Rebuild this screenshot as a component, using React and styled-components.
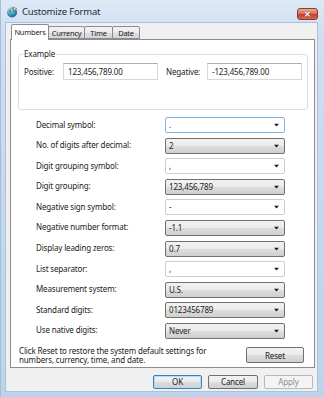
import React from 'react'
import styled, { createGlobalStyle } from 'styled-components'

const GlobalStyle = createGlobalStyle`
  html, body {
    margin: 0;
    padding: 0;
  }
  body {
    font-family: "Noto Sans", "Liberation Sans", sans-serif;
    font-size: 8px;
    letter-spacing: -0.15px;
    color: #222;
  }
  * {
    box-sizing: border-box;
  }
`

const tabs = [
  { name: 'Numbers', width: 38, active: true },
  { name: 'Currency', width: 37 },
  { name: 'Time', width: 29 },
  { name: 'Date', width: 28 },
]

const settings = [
  { label: 'Decimal symbol:', value: '.', kind: 'edit', focus: true },
  { label: 'No. of digits after decimal:', value: '2', kind: 'list' },
  { label: 'Digit grouping symbol:', value: ',', kind: 'edit' },
  { label: 'Digit grouping:', value: '123,456,789', kind: 'list' },
  { label: 'Negative sign symbol:', value: '-', kind: 'edit' },
  { label: 'Negative number format:', value: '-1.1', kind: 'list' },
  { label: 'Display leading zeros:', value: '0.7', kind: 'list' },
  { label: 'List separator:', value: ',', kind: 'edit' },
  { label: 'Measurement system:', value: 'U.S.', kind: 'list' },
  { label: 'Standard digits:', value: '0123456789', kind: 'list' },
  { label: 'Use native digits:', value: 'Never', kind: 'list' },
]

const GlobeIcon = () => (
  <svg width="12" height="12" viewBox="0 0 12 12">
    <defs>
      <radialGradient id="sea" cx="0.35" cy="0.3" r="0.8">
        <stop offset="0" stopColor="#bfe3ff" />
        <stop offset="0.6" stopColor="#2f86d6" />
        <stop offset="1" stopColor="#1a4f9a" />
      </radialGradient>
    </defs>
    <circle cx="6" cy="6.5" r="5" fill="url(#sea)" />
    <path d="M3 4.2c1-.9 2.2-.6 2.6.3.3.8-.6 1.2-.2 2 .4.7-.3 1.6-1.1 1.3C3.3 7.4 2.4 5 3 4.2z" fill="#4fae3a" />
    <path d="M7.2 6.2c.8-.4 1.9 0 2 .9.1.9-.9 1.7-1.6 1.4-.6-.3-.9-1.9-.4-2.3z" fill="#4fae3a" />
    <path d="M7 1.2l3.8 1.6-1.3.5 1.5 1.5-.7.6-1.5-1.5-.4 1.3z" fill="#fff" stroke="#333" strokeWidth="0.5" />
  </svg>
)

const CaretIcon = () => (
  <svg width="5" height="4" viewBox="0 0 5 4">
    <path d="M0 0.8h5L2.5 3.6z" fill="#1c1c1c" />
  </svg>
)

const App = () => {
  return (
    <>
      <GlobalStyle />
      <Window>
        <TitleBar>
          <GlobeIcon />
          <Title>Customize Format</Title>
          <CloseButton>✕</CloseButton>
        </TitleBar>
        <Client>
          <TabRow>
            {tabs.map(t => (
              <Tab key={t.name} $active={t.active} $width={t.width}>{t.name}</Tab>
            ))}
          </TabRow>
          <Panel>
            <GroupBox>
              <Legend>Example</Legend>
              <ExampleRow>
                <ExampleLabel $width={39}>Positive:</ExampleLabel>
                <TextBox>123,456,789.00</TextBox>
                <ExampleLabel $width={41} $gap={8}>Negative:</ExampleLabel>
                <TextBox>-123,456,789.00</TextBox>
              </ExampleRow>
            </GroupBox>
            <SettingsGrid>
              {settings.map(s => (
                <React.Fragment key={s.label}>
                  <SettingLabel>{s.label}</SettingLabel>
                  <Combo $kind={s.kind} $focus={s.focus}>
                    <span>{s.value}</span>
                    <CaretIcon />
                  </Combo>
                </React.Fragment>
              ))}
            </SettingsGrid>
            <Footer>
              <Note>
                Click Reset to restore the system default settings for<br />
                numbers, currency, time, and date.
              </Note>
              <Button $width={58} $height={16}>Reset</Button>
            </Footer>
          </Panel>
          <ButtonBar>
            <Button $width={49} $default>OK</Button>
            <Button $width={50}>Cancel</Button>
            <Button $width={49} $disabled>Apply</Button>
          </ButtonBar>
        </Client>
      </Window>
    </>
  )
}

const Window = styled.div`
  width: 324px;
  height: 397px;
  display: flex;
  flex-direction: column;
  padding: 0 6px 5px 4px;
  background: linear-gradient(180deg, #dde9f6 0%, #cfdff1 8%, #c3d7ee 60%, #bdd3ec 100%);
  border-left: 1px solid #a6bdd8;
`

const TitleBar = styled.div`
  height: 22px;
  flex: none;
  display: flex;
  align-items: center;
  gap: 4px;
  padding: 1px 0 0 1px;
`

const Title = styled.div`
  font-size: 9.5px;
  color: #1e2a3a;
  letter-spacing: -0.2px;
`

const CloseButton = styled.div`
  margin-left: auto;
  margin-top: 4px;
  width: 21px;
  height: 12px;
  border: 1px solid #8d3a2e;
  border-radius: 3px;
  background: linear-gradient(180deg, #e9a99c 0%, #d7705e 45%, #c4432c 55%, #d4664f 100%);
  color: #fff;
  font-size: 8px;
  font-weight: 700;
  display: flex;
  align-items: center;
  justify-content: center;
  line-height: 1;
  letter-spacing: 0;
  text-shadow: 0 0 1px #5a1a10;
`

const Client = styled.div`
  flex: 1;
  display: flex;
  flex-direction: column;
  background: #f0f0f0;
  border: 1px solid #adc1d8;
  padding: 1px 2px 0 4px;
`

const TabRow = styled.div`
  display: flex;
  align-items: flex-end;
  height: 15px;
  padding-left: 1px;
`

const Tab = styled.div`
  width: ${p => p.$width}px;
  height: ${p => (p.$active ? 16 : 13)}px;
  margin-bottom: ${p => (p.$active ? -1 : 0)}px;
  margin-right: -1px;
  position: relative;
  z-index: ${p => (p.$active ? 2 : 1)};
  display: flex;
  align-items: center;
  justify-content: center;
  font-size: 7.5px;
  letter-spacing: -0.25px;
  white-space: nowrap;
  border: 1px solid #898c95;
  border-bottom: ${p => (p.$active ? 'none' : '1px solid #898c95')};
  background: ${p => (p.$active ? '#fff' : 'linear-gradient(180deg, #f3f3f3 0%, #ebebeb 50%, #dedede 51%, #d6d6d6 100%)')};
  border-radius: 2px 2px 0 0;
  padding-bottom: ${p => (p.$active ? 2 : 0)}px;
`

const Panel = styled.div`
  background: #fff;
  border: 1px solid #898c95;
  padding: 9px 7px 2px 7px;
  display: flex;
  flex-direction: column;
`

const GroupBox = styled.fieldset`
  margin: 0;
  height: 61px;
  border: 1px solid #d5dfe5;
  border-radius: 3px;
  padding: 0 5px;
`

const Legend = styled.legend`
  padding: 0 1px;
  margin-left: -1px;
  line-height: 10px;
  font-size: 8px;
`

const ExampleRow = styled.div`
  display: flex;
  align-items: center;
  margin-top: 4px;
`

const ExampleLabel = styled.span`
  width: ${p => p.$width}px;
  margin-left: ${p => p.$gap || 0}px;
`

const TextBox = styled.div`
  width: 95px;
  height: 17px;
  border: 1px solid #d4d8de;
  border-top-color: #abadb3;
  padding: 0 4px;
  display: flex;
  align-items: center;
`

const SettingsGrid = styled.div`
  display: grid;
  grid-template-columns: 129px 120px;
  grid-auto-rows: 16px;
  row-gap: 4.6px;
  padding-left: 18px;
  margin-top: 7px;
  align-items: center;
`

const SettingLabel = styled.div`
  margin-top: -2px;
`

const Combo = styled.div`
  height: 16px;
  display: flex;
  align-items: center;
  justify-content: space-between;
  padding: 0 5px 0 3px;
  border-radius: 2px;
  border: 1px solid ${p => (p.$kind === 'list' ? '#707070' : p.$focus ? '#7eb4ea' : '#c9ced6')};
  background: ${p => (p.$kind === 'list'
    ? 'linear-gradient(180deg, #f2f2f2 0%, #ebebeb 48%, #dddddd 52%, #cfcfcf 100%)'
    : '#fff')};
  span {
    line-height: 1;
  }
`

const Footer = styled.div`
  display: flex;
  align-items: center;
  justify-content: space-between;
  margin-top: 7px;
  padding: 0 3px 0 1px;
`

const Note = styled.div`
  line-height: 9.5px;
`

const Button = styled.div`
  width: ${p => p.$width}px;
  height: ${p => p.$height || 14}px;
  display: flex;
  align-items: center;
  justify-content: center;
  border-radius: 2px;
  border: 1px solid ${p => (p.$default ? '#3c7fb1' : p.$disabled ? '#b5b8bc' : '#707070')};
  background: ${p => (p.$disabled
    ? '#f4f4f4'
    : 'linear-gradient(180deg, #f2f2f2 0%, #ebebeb 48%, #dddddd 52%, #cfcfcf 100%)')};
  color: ${p => (p.$disabled ? '#8d8d8d' : '#1a1a1a')};
  box-shadow: ${p => (p.$default ? 'inset 0 0 0 1px #b6dcf5' : 'none')};
`

const ButtonBar = styled.div`
  display: flex;
  justify-content: flex-end;
  gap: 6px;
  margin-top: 7px;
  padding-right: 2px;
`

export default App
